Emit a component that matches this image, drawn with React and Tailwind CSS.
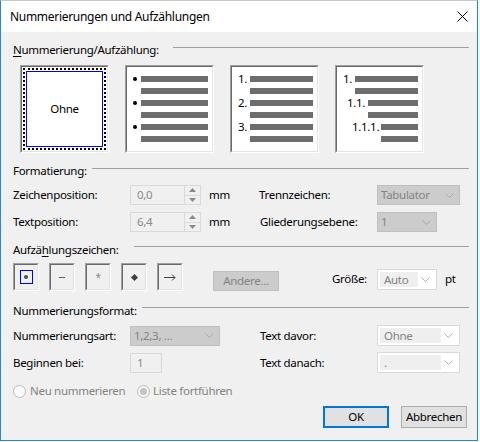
import React from "react";

const Chevron = ({ color = "#a0a0a0" }) => (
  <svg width="9" height="5" viewBox="0 0 9 5" className="block">
    <path d="M0.5 0.5 L4.5 4.5 L8.5 0.5" fill="none" stroke={color} strokeWidth="1" />
  </svg>
);

const Header = ({ children, gap, lineTop = 5, className = "" }) => (
  <div className={"flex h-[16px] " + className}>
    <span className="leading-[16px] whitespace-nowrap">{children}</span>
    <div className={"flex-1 h-px bg-[#a0a0a0] " + gap} style={{ marginTop: lineTop }} />
  </div>
);

const Sunken = ({ className = "", innerClass = "", children }) => (
  <div className={"border border-t-[#a0a0a0] border-l-[#a0a0a0] border-b-white border-r-white " + className}>
    <div className={"w-full h-full border border-t-[#696969] border-l-[#696969] border-b-[#e3e3e3] border-r-[#e3e3e3] " + innerClass}>
      {children}
    </div>
  </div>
);

const Bar = () => <div className="flex-1 h-[6px] bg-[#6d6d6d]" />;

const Row = ({ pl, w, children }) => (
  <div className="flex items-center h-[6px]" style={{ paddingLeft: pl }}>
    <div className="flex items-center leading-none whitespace-nowrap text-[#000]" style={{ width: w }}>
      {children}
    </div>
    <Bar />
  </div>
);

const Spin = ({ value }) => (
  <div className="flex w-[71px] h-[20px] border border-[#d9d9d9] bg-[#f0f0f0]">
    <div className="flex-1 pl-[6px] flex items-center text-[#8a8a8a]">{value}</div>
    <div className="w-[16px] border-l border-[#d9d9d9] flex flex-col">
      <div className="flex-1 flex items-center justify-center border-b border-[#d9d9d9]">
        <svg width="7" height="4" viewBox="0 0 7 4"><path d="M0 4 L3.5 0 L7 4 Z" fill="#8a8a8a" /></svg>
      </div>
      <div className="flex-1 flex items-center justify-center">
        <svg width="7" height="4" viewBox="0 0 7 4"><path d="M0 0 L3.5 4 L7 0 Z" fill="#8a8a8a" /></svg>
      </div>
    </div>
  </div>
);

const DisabledSelect = ({ value, w }) => (
  <div className="flex items-center h-[20px] border border-[#bfbfbf] bg-[#cccccc] text-[#838383] pl-[3px] pr-[5px]" style={{ width: w }}>
    <span className="flex-1 leading-[16px] whitespace-nowrap">{value}</span>
    <Chevron color="#a8a8a8" />
  </div>
);

const Combo = ({ value, w, inner }) => (
  <div className="flex items-center h-[21px] border border-[#d9d9d9] bg-white pl-[2px] pr-[4px]" style={{ width: w }}>
    <div className="h-[15px] bg-[#efefef] text-[#838383] pl-[4px] flex items-center leading-none" style={{ width: inner }}>
      {value}
    </div>
    <div className="flex-1 flex justify-center">
      <Chevron color="#b0b0b0" />
    </div>
  </div>
);

const BulletBtn = ({ children }) => (
  <Sunken className="w-[26px] h-[28px]" innerClass="bg-[#f0f0f0] flex items-center justify-center">
    {children}
  </Sunken>
);

export default function App() {
  return (
    <div className="w-[480px] h-[442px] bg-[#f4f4f4] font-['Noto_Sans','Open_Sans',sans-serif] text-[11.5px] tracking-[-0.3px] text-black">
      <div className="w-[478px] h-[441px] border border-[#2a86d6] border-t-[#c8c8c8] bg-[#f0f0f0] flex flex-col">
        {/* Title bar */}
        <div className="h-[31px] bg-white flex items-center pl-[9px] pr-[9px]">
          <span className="flex-1 leading-[16px] text-[12px]">Nummerierungen und Aufzählungen</span>
          <svg width="11" height="11" viewBox="0 0 11 11">
            <path d="M0.5 0.5 L10.5 10.5 M10.5 0.5 L0.5 10.5" stroke="#000" strokeWidth="1" />
          </svg>
        </div>

        <div className="flex flex-col pl-[12px] pr-[8px]">
          <Header gap="ml-[14px]" className="mt-[10px]">
            <span className="underline underline-offset-2">N</span>ummerierung/Aufzählung:
          </Header>

          {/* previews */}
          <div className="flex gap-[16px] pl-[7px] mt-[7px]">
            <Sunken className="w-[89px] h-[88px]" innerClass="bg-white p-[1px]">
              <div className="w-full h-full border-2 border-dotted border-black p-[1px]">
                <div className="w-full h-full border border-[#0000ff] flex items-center justify-center">Ohne</div>
              </div>
            </Sunken>
            <Sunken className="w-[89px] h-[88px]" innerClass="bg-white pt-[9px] pr-[4px] flex flex-col gap-[6px]">
              {[true, false, true, false, true, false].map((b, i) => (
                <div key={i} className="flex items-center h-[6px] pl-[6px]">
                  <div className="w-[8px] flex items-center">
                    {b && <div className="w-[4px] h-[4px] rounded-full bg-black" />}
                  </div>
                  <Bar />
                </div>
              ))}
            </Sunken>
            <Sunken className="w-[89px] h-[88px]" innerClass="bg-white pt-[9px] pr-[4px] flex flex-col gap-[6px]">
              <Row pl={6} w={12}>1.</Row>
              <Row pl={6} w={12}></Row>
              <Row pl={6} w={12}>2.</Row>
              <Row pl={6} w={12}></Row>
              <Row pl={6} w={12}>3.</Row>
              <Row pl={6} w={12}></Row>
            </Sunken>
            <Sunken className="w-[89px] h-[88px]" innerClass="bg-white pt-[9px] pr-[4px] flex flex-col gap-[6px]">
              <Row pl={6} w={12}>1.</Row>
              <Row pl={6} w={12}></Row>
              <Row pl={10} w={21}>1.1.</Row>
              <Row pl={10} w={21}></Row>
              <Row pl={15} w={29}>1.1.1.</Row>
              <Row pl={15} w={29}></Row>
            </Sunken>
          </div>

          <Header gap="ml-[5px]" className="mt-[10px]">Formatierung:</Header>

          <div className="flex items-center h-[20px] mt-[6px]">
            <span className="w-[117px]">Zeichenposition:</span>
            <Spin value="0,0" />
            <span className="ml-[8px] w-[50px]">mm</span>
            <span className="w-[118px]">Trennzeichen:</span>
            <DisabledSelect value="Tabulator" w={83} />
          </div>
          <div className="flex items-center h-[20px] mt-[7px]">
            <span className="w-[117px]">Textposition:</span>
            <Spin value="6,4" />
            <span className="ml-[8px] w-[50px]">mm</span>
            <span className="w-[118px] pl-[1px]">Gliederungsebene:</span>
            <DisabledSelect value="1" w={60} />
          </div>

          <Header gap="ml-[15px]" lineTop={4} className="mt-[10px]">
            Aufzä<span className="underline underline-offset-2">h</span>lungszeichen:
          </Header>

          <div className="flex items-start h-[28px] mt-[5px]">
            <div className="flex gap-[10px]">
              <BulletBtn>
                <div className="w-[13px] h-[14px] border border-[#0000ff] flex items-center justify-center">
                  <div className="w-[4px] h-[4px] rounded-full bg-[#505050]" />
                </div>
              </BulletBtn>
              <BulletBtn>
                <div className="w-[6px] h-px bg-[#606060]" />
              </BulletBtn>
              <BulletBtn>
                <span className="text-[10px] leading-none text-[#8a8a8a]">*</span>
              </BulletBtn>
              <BulletBtn>
                <div className="w-[5px] h-[5px] rotate-45 bg-[#404040]" />
              </BulletBtn>
              <BulletBtn>
                <svg width="12" height="7" viewBox="0 0 12 7">
                  <path d="M0 3.5 H11 M8 0.5 L11 3.5 L8 6.5" fill="none" stroke="#404040" strokeWidth="1" />
                </svg>
              </BulletBtn>
            </div>
            <div className="ml-[30px] mt-[8px] w-[66px] h-[20px] border border-[#bfbfbf] bg-[#cccccc] text-[#838383] flex items-center justify-center">
              Andere...
            </div>
            <span className="ml-[53px] mt-[8px] w-[45px] leading-[16px]">Größe:</span>
            <div className="mt-[6px]">
              <Combo value="Auto" w={60} inner={38} />
            </div>
            <span className="ml-[8px] mt-[8px] leading-[16px]">pt</span>
          </div>

          <Header gap="ml-[5px]" lineTop={4} className="mt-[12px]">Nummerierungsformat:</Header>

          <div className="flex items-center h-[21px] mt-[6px]">
            <span className="w-[117px]">Nummerierungsart:</span>
            <DisabledSelect value="1,2,3, ..." w={90} />
            <span className="ml-[40px] w-[117px]">Text davor:</span>
            <Combo value="Ohne" w={83} inner={61} />
          </div>
          <div className="flex items-center h-[21px] mt-[6px]">
            <span className="w-[117px]">Beginnen bei:</span>
            <div className="w-[32px] h-[20px] border border-[#d9d9d9] bg-[#f0f0f0] pl-[6px] flex items-center text-[#8a8a8a]">1</div>
            <span className="ml-[98px] w-[117px]">Text danach:</span>
            <Combo value="." w={83} inner={61} />
          </div>

          <div className="flex items-center h-[16px] mt-[10px] text-[#838383]">
            <div className="w-[13px] h-[13px] rounded-full border border-[#bcbcbc] bg-[#fbfbfb]" />
            <span className="ml-[4px] w-[107px]">Neu nummerieren</span>
            <div className="w-[13px] h-[13px] rounded-full border border-[#bcbcbc] bg-[#f6f6f6] flex items-center justify-center">
              <div className="w-[7px] h-[7px] rounded-full bg-[#c4c4c4]" />
            </div>
            <span className="ml-[3px]">Liste fortführen</span>
          </div>

          <div className="flex justify-end gap-[12px] mt-[7px] mr-[2px]">
            <div className="w-[66px] h-[22px] border-2 border-[#0078d7] bg-[#e1e1e1] flex items-center justify-center">OK</div>
            <div className="w-[66px] h-[22px] border border-[#adadad] bg-[#e1e1e1] flex items-center justify-center">Abbrechen</div>
          </div>
        </div>
      </div>
    </div>
  );
}
